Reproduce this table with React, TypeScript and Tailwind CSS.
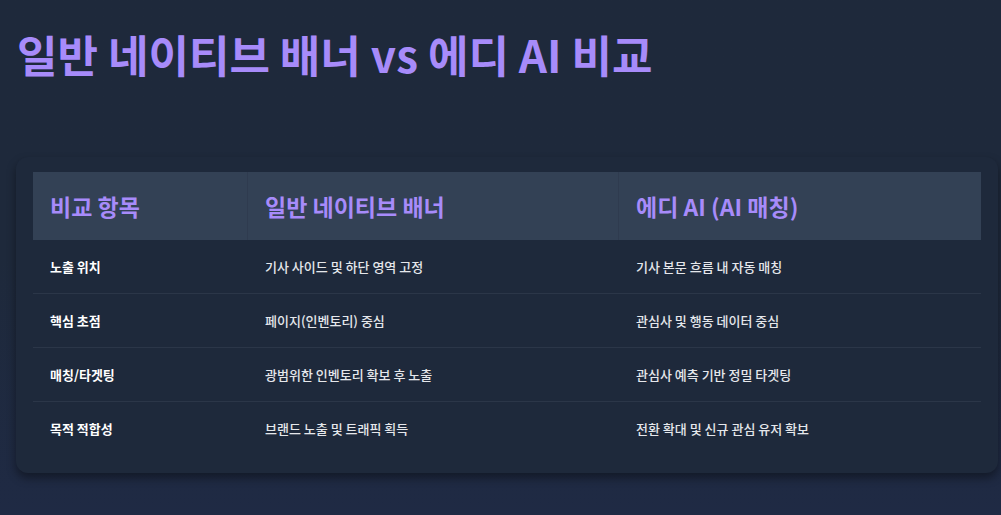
const rows = [
  { item: "노출 위치", normal: "기사 사이드 및 하단 영역 고정", ai: "기사 본문 흐름 내 자동 매칭" },
  { item: "핵심 초점", normal: "페이지(인벤토리) 중심", ai: "관심사 및 행동 데이터 중심" },
  { item: "매칭/타겟팅", normal: "광범위한 인벤토리 확보 후 노출", ai: "관심사 예측 기반 정밀 타겟팅" },
  { item: "목적 적합성", normal: "브랜드 노출 및 트래픽 획득", ai: "전환 확대 및 신규 관심 유저 확보" },
];

export default function App() {
  return (
    <div
      className="min-h-screen w-full bg-gradient-to-b from-[#1e293b] via-[#1e293b] to-[#1f2a44] px-4 pt-6 pb-10"
      style={{ fontFamily: "'Noto Sans CJK KR', 'Noto Sans', sans-serif" }}
    >
      <h1 className="pl-[1px] text-[44px] font-bold leading-[60px] text-[#a78bfa]">
        일반 네이티브 배너 vs 에디 AI 비교
      </h1>

      <div className="mt-[73px] mr-[-13px] rounded-xl bg-[#1e293b] px-[17px] pt-[15px] pb-[17px] shadow-[0_5px_10px_rgba(0,0,0,0.4)]">
        <div className="grid grid-cols-[214px_371px_1fr]">
          <div className="flex h-[68px] items-center bg-[#334155] px-[17px] text-[23px] font-bold text-[#a78bfa]">
            비교 항목
          </div>
          <div className="flex h-[68px] items-center border-l border-[#2f3b4f] bg-[#334155] px-[17px] text-[23px] font-bold text-[#a78bfa]">
            일반 네이티브 배너
          </div>
          <div className="flex h-[68px] items-center border-l border-[#2f3b4f] bg-[#334155] px-[17px] text-[23px] font-bold text-[#a78bfa]">
            에디 AI (AI 매칭)
          </div>

          {rows.map((r, i) => {
            const line = i < rows.length - 1 ? "border-b border-[#2b3648]" : "";
            return (
              <div key={r.item} className="contents">
                <div className={`flex h-[54px] items-center px-[17px] text-[13px] font-bold text-white ${line}`}>
                  {r.item}
                </div>
                <div className={`flex h-[54px] items-center px-[18px] text-[13px] font-medium text-[#e5e7eb] ${line}`}>
                  {r.normal}
                </div>
                <div className={`flex h-[54px] items-center px-[18px] text-[13px] font-medium text-[#e5e7eb] ${line}`}>
                  {r.ai}
                </div>
              </div>
            );
          })}
        </div>
      </div>
    </div>
  );
}
